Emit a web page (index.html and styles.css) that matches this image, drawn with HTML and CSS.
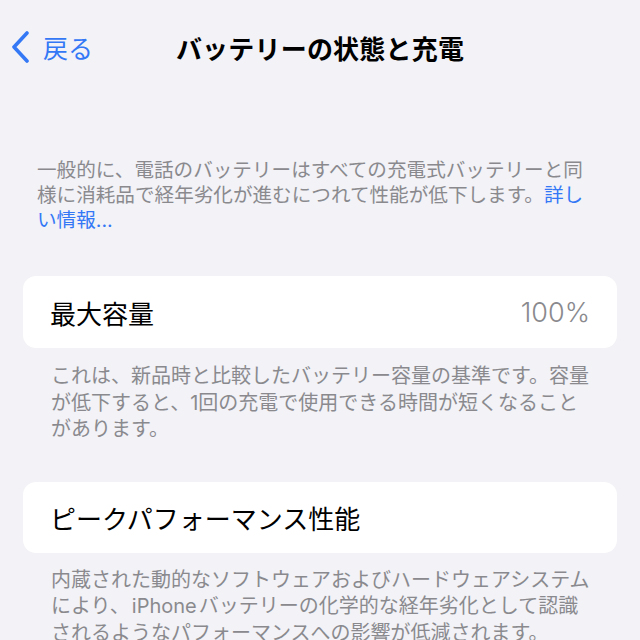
FILE: index.html
```html
<html lang="ja">
<head>
    <meta charset="UTF-8">
    <meta name="viewport" content="width=device-width, initial-scale=1.0">
    <title>バッテリーの状態と充電</title>
    <link rel="stylesheet" href="styles.css">
</head>
<body>
    <!-- Navigation Bar -->
    <header class="nav">
        <a class="nav-back" href="#">
            <svg class="chevron" width="20" height="32" viewBox="0 0 20 32">
                <path d="M16 2 L3 16 L16 30" fill="none" stroke="currentColor" stroke-width="3.6" stroke-linecap="round" stroke-linejoin="round"/>
            </svg>
            <span>戻る</span>
        </a>
        <h1 class="nav-title">バッテリーの状態と充電</h1>
        <div></div>
    </header>

    <main class="content">
        <p class="intro">一般的に、電話のバッテリーはすべての充電式バッテリーと同様に消耗品で経年劣化が進むにつれて性能が低下します。<a class="link" href="#">詳しい情報...</a></p>

        <section class="group group-capacity">
            <div class="card">
                <span class="card-label">最大容量</span>
                <span class="card-value">100%</span>
            </div>
            <p class="footer">これは、新品時と比較したバッテリー容量の基準です。容量が低下すると、1回の充電で使用できる時間が短くなることがあります。</p>
        </section>

        <section class="group group-peak">
            <div class="card card-tall">
                <span class="card-label">ピークパフォーマンス性能</span>
            </div>
            <p class="footer footer-last">内蔵された動的なソフトウェアおよびハードウェアシステムにより、<span class="latin">iPhone</span>バッテリーの化学的な経年劣化として認識されるようなパフォーマンスへの影響が低減されます。</p>
        </section>
    </main>
</body>
</html>
```

FILE: styles.css
```css
/* Global Styling */
body {
    font-family: Inter, "Noto Sans CJK JP", sans-serif;
    margin: 0;
    padding: 0;
    background: #f2f2f7;
    color: #000;
    overflow: hidden;
}

/* Navigation Bar */
.nav {
    display: grid;
    grid-template-columns: 1fr auto 1fr;
    align-items: center;
    height: 54px;
    margin-top: 20px;
}

.nav-back {
    display: flex;
    align-items: center;
    gap: 12px;
    padding-left: 11px;
    color: #3478f6;
    text-decoration: none;
    font-size: 25px;
}

.chevron {
    display: block;
}

.nav-title {
    margin: 0;
    font-size: 26px;
    font-weight: 700;
    letter-spacing: 0.2px;
}

/* Content */
.content {
    padding: 0 23px;
}

.intro {
    margin: 84px 0 0;
    padding: 0 19px 0 14px;
    font-size: 19.6px;
    line-height: 25px;
    color: #8a8a8e;
}

.link {
    color: #3478f6;
    text-decoration: none;
}

.group-capacity {
    margin-top: 43px;
}

.group-peak {
    margin-top: 39px;
}

.card {
    display: flex;
    align-items: center;
    justify-content: space-between;
    height: 72px;
    padding: 0 27px;
    background: #fff;
    border-radius: 13px;
}

.card-tall {
    height: 71px;
}

.card-label {
    font-size: 26px;
}

.card-value {
    font-size: 27px;
    font-weight: 300;
    color: #8a8a8e;
}

.footer {
    margin: 0;
    padding: 15px 23px 0 28px;
    font-size: 20px;
    line-height: 26.5px;
    color: #8a8a8e;
}

.footer-last {
    padding-top: 14px;
}

.latin {
    margin: 0 2px;
}
```
